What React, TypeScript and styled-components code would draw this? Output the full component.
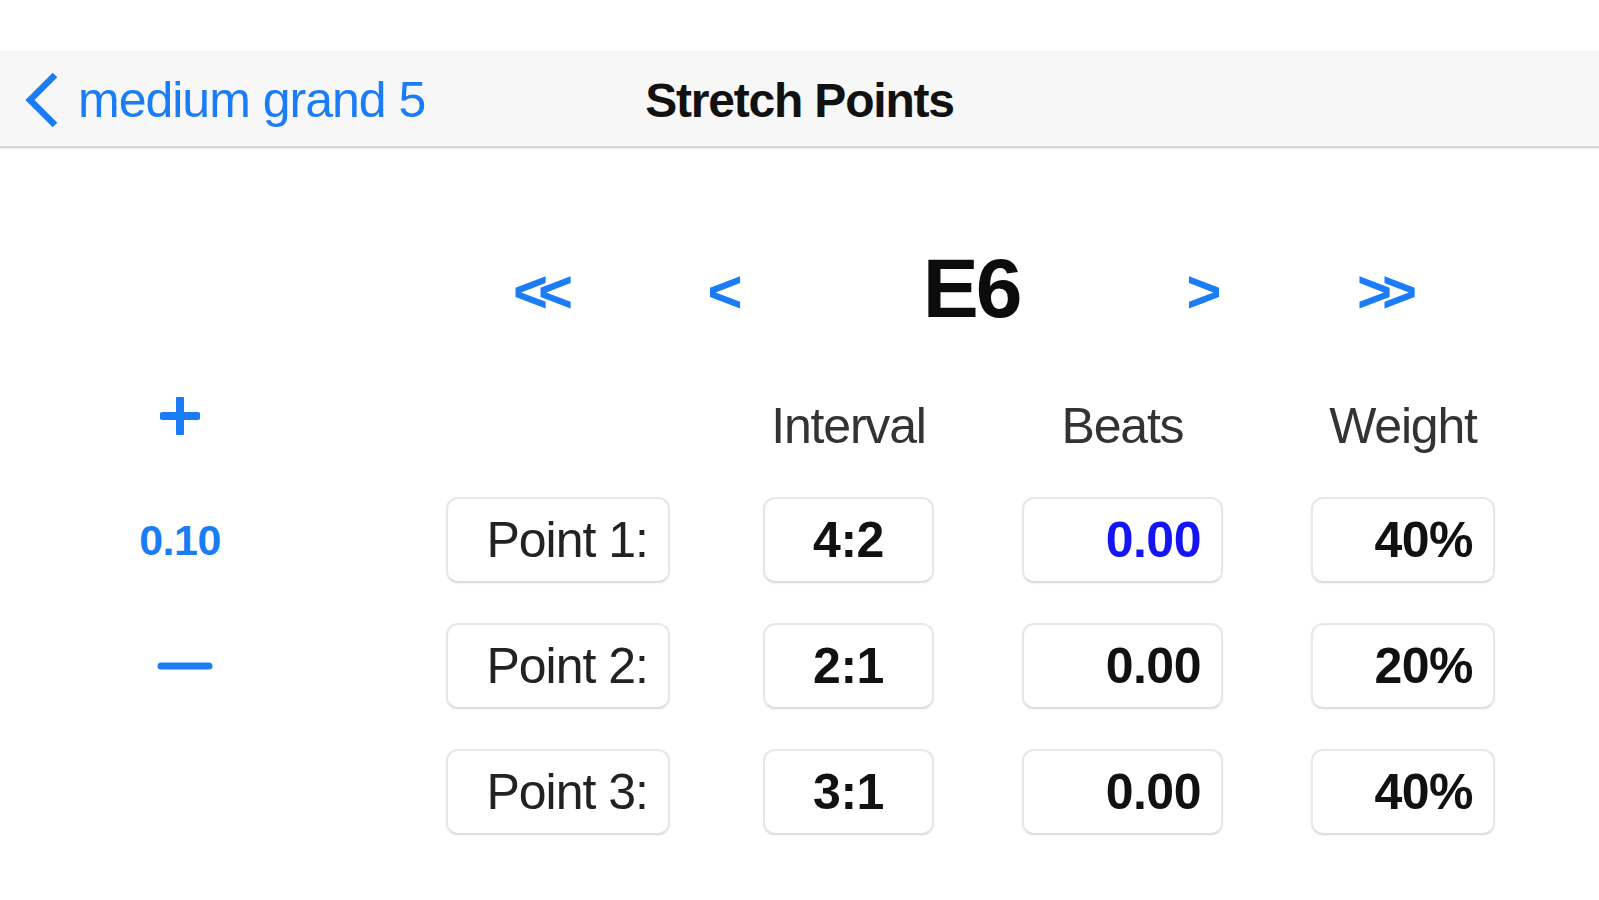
import styled, { createGlobalStyle } from "styled-components";

const GlobalStyle = createGlobalStyle`
  html, body {
    margin: 0;
    padding: 0;
    background: #ffffff;
    font-family: "Liberation Sans", Arial, sans-serif;
  }
`;

const BLUE = "#1a7df6";

const Page = styled.div`
  width: 1599px;
  height: 900px;
  background: #ffffff;
  overflow: hidden;
`;

const StatusStrip = styled.div`
  height: 51px;
  background: #ffffff;
`;

const NavBar = styled.div`
  height: 97px;
  box-sizing: border-box;
  background: #f7f7f7;
  border-bottom: 2px solid #d6d6d6;
  box-shadow: 0 1px 1px rgba(0, 0, 0, 0.06);
  display: grid;
  grid-template-columns: 1fr auto 1fr;
  align-items: center;
  padding-top: 3px;
`;

const BackButton = styled.div`
  display: flex;
  align-items: center;
  padding-left: 25px;
  gap: 19px;
  color: ${BLUE};
  font-size: 50px;
  letter-spacing: -1px;
`;

const Title = styled.div`
  font-size: 48px;
  font-weight: bold;
  letter-spacing: -1.2px;
  color: #111;
`;

const NoteRow = styled.div`
  display: grid;
  grid-template-columns: 182px 182px 310px 156px 210px;
  padding-left: 452px;
  margin-top: 92px;
  height: 95px;
  align-items: center;
`;

const Arrow = styled.div`
  text-align: center;
  color: ${BLUE};
  font-size: 60px;
  font-weight: bold;
  letter-spacing: -10px;
  text-indent: -10px;
  padding-top: 6px;
`;

const NoteName = styled.div`
  text-align: center;
  font-size: 84px;
  font-weight: bold;
  letter-spacing: -3px;
  color: #0c0c0c;
`;

const Table = styled.div`
  display: grid;
  grid-template-columns: 278px 229px 171px 201px 184px;
  grid-template-rows: 62px;
  grid-auto-rows: 86px;
  column-gap: 88px;
  row-gap: 40px;
  padding-left: 80px;
  margin-top: 60px;
`;

const Control = styled.div<{ $row: number; $top?: boolean; $shift?: number }>`
  grid-column: 1;
  grid-row: ${(p) => p.$row};
  width: 200px;
  display: flex;
  align-items: ${(p) => (p.$top ? "flex-start" : "center")};
  justify-content: center;
  padding-top: ${(p) => (p.$top ? "2px" : "0")};
  padding-left: ${(p) => p.$shift ?? 0}px;
  box-sizing: border-box;
  color: ${BLUE};
  font-size: 43px;
  font-weight: bold;
  letter-spacing: -0.5px;
`;

const Header = styled.div<{ $col: number }>`
  grid-column: ${(p) => p.$col};
  grid-row: 1;
  display: flex;
  align-items: center;
  justify-content: center;
  font-size: 50px;
  letter-spacing: -1.2px;
  color: #333;
`;

const Cell = styled.div<{
  $col: number;
  $row: number;
  $align: "center" | "right";
  $width: number;
  $bold?: boolean;
  $active?: boolean;
}>`
  grid-column: ${(p) => p.$col};
  grid-row: ${(p) => p.$row};
  width: ${(p) => p.$width}px;
  height: 86px;
  box-sizing: border-box;
  background: #fff;
  border: 2px solid #e7e7e7;
  border-bottom-color: #dedede;
  border-radius: 12px;
  box-shadow: 0 1px 2px rgba(0, 0, 0, 0.05);
  display: flex;
  align-items: center;
  justify-content: ${(p) => (p.$align === "right" ? "flex-end" : "center")};
  padding: 0 20px;
  font-size: 50px;
  font-weight: ${(p) => (p.$bold ? "bold" : "normal")};
  letter-spacing: ${(p) => (p.$bold ? "-0.5px" : "-1px")};
  color: ${(p) => (p.$active ? "#1414f5" : p.$bold ? "#111" : "#222")};
`;

const ChevronLeft = () => (
  <svg width="34" height="56" viewBox="0 0 34 56">
    <path d="M30 3 L5 28 L30 53" fill="none" stroke={BLUE} strokeWidth="6.5" strokeLinecap="butt" strokeLinejoin="miter" />
  </svg>
);

const PlusIcon = () => (
  <svg width="40" height="38" viewBox="0 0 40 38">
    <path d="M20 2 V36 M3 19 H37" stroke={BLUE} strokeWidth="8" strokeLinecap="round" />
  </svg>
);

const MinusIcon = () => (
  <svg width="56" height="10" viewBox="0 0 56 10">
    <path d="M4 5 H52" stroke={BLUE} strokeWidth="7" strokeLinecap="round" />
  </svg>
);

const points = [
  { label: "Point 1:", interval: "4:2", beats: "0.00", weight: "40%", active: true },
  { label: "Point 2:", interval: "2:1", beats: "0.00", weight: "20%", active: false },
  { label: "Point 3:", interval: "3:1", beats: "0.00", weight: "40%", active: false },
];

export default function App() {
  return (
    <Page>
      <GlobalStyle />
      <StatusStrip />
      <NavBar>
        <BackButton>
          <ChevronLeft />
          <span>medium grand 5</span>
        </BackButton>
        <Title>Stretch Points</Title>
        <div />
      </NavBar>

      <NoteRow>
        <Arrow>&lt;&lt;</Arrow>
        <Arrow>&lt;</Arrow>
        <NoteName>E6</NoteName>
        <Arrow>&gt;</Arrow>
        <Arrow>&gt;&gt;</Arrow>
      </NoteRow>

      <Table>
        <Control $row={1} $top>
          <PlusIcon />
        </Control>
        <Header $col={3}>Interval</Header>
        <Header $col={4}>Beats</Header>
        <Header $col={5}>Weight</Header>

        <Control $row={2}>0.10</Control>
        <Control $row={3} $shift={10}>
          <MinusIcon />
        </Control>

        {points.flatMap((pt, i) => [
          <Cell key={`${i}-l`} $col={2} $row={i + 2} $align="right" $width={224}>
            {pt.label}
          </Cell>,
          <Cell key={`${i}-i`} $col={3} $row={i + 2} $align="center" $width={171} $bold>
            {pt.interval}
          </Cell>,
          <Cell key={`${i}-b`} $col={4} $row={i + 2} $align="right" $width={201} $bold $active={pt.active}>
            {pt.beats}
          </Cell>,
          <Cell key={`${i}-w`} $col={5} $row={i + 2} $align="right" $width={184} $bold>
            {pt.weight}
          </Cell>,
        ])}
      </Table>
    </Page>
  );
}
